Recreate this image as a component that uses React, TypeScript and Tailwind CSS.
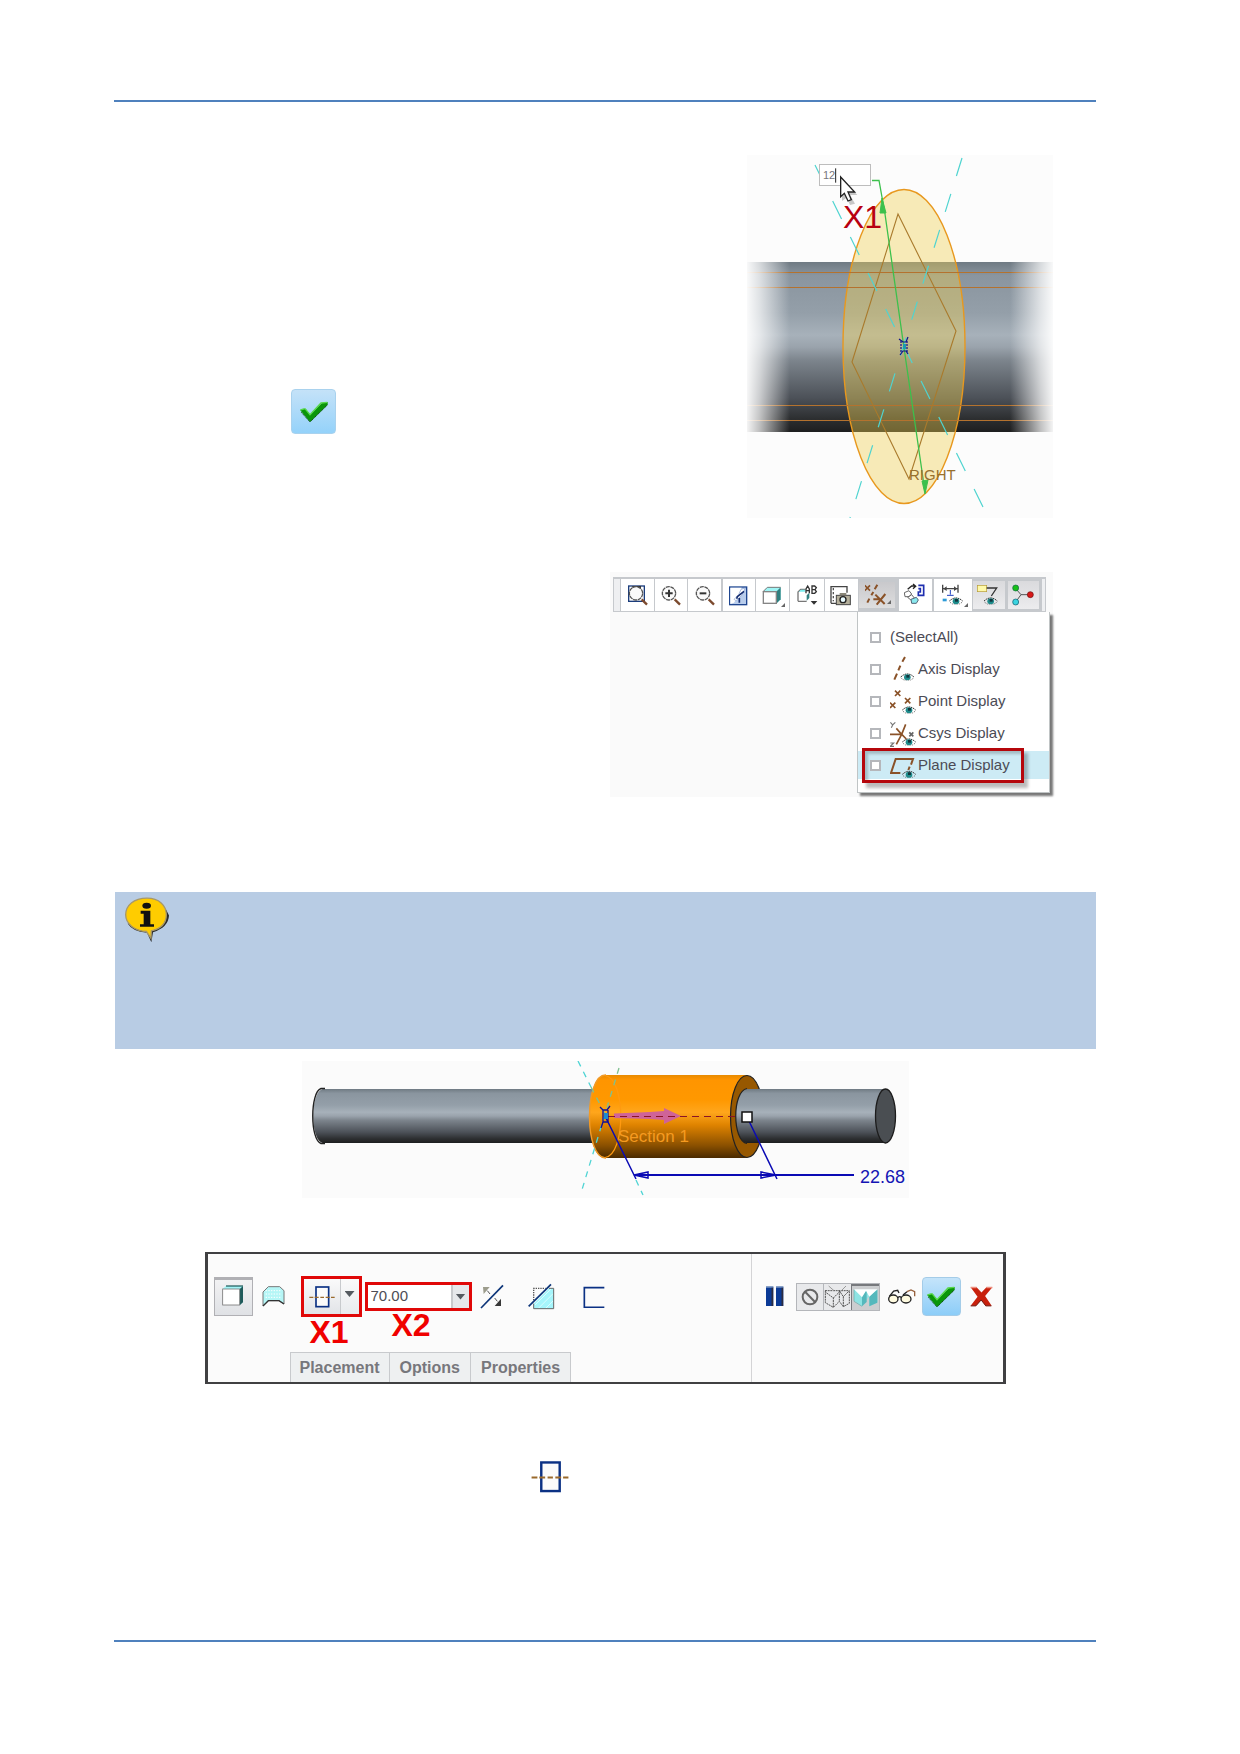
import type { ReactNode } from "react";

const STEEL: [number, string][] = [
  [0, "#6f7a83"],
  [0.08, "#8a959f"],
  [0.3, "#949fa9"],
  [0.43, "#a7b1ba"],
  [0.5, "#9aa3ac"],
  [0.58, "#7c848c"],
  [0.8, "#4c5158"],
  [0.92, "#2d2f31"],
  [1, "#1d1e1f"],
];

function Stops({ list }: { list: [number, string][] }) {
  return (
    <>
      {list.map(([o, c]) => (
        <stop key={o} offset={o} stopColor={c} />
      ))}
    </>
  );
}

function Icon({ box, w, h, children }: { box: string; w: number; h: number; children: ReactNode }) {
  return (
    <svg viewBox={box} width={w} height={h} className="shrink-0" aria-hidden="true">
      {children}
    </svg>
  );
}

/* ---------- shared marks ---------- */

function Eye({ x, y }: { x: number; y: number }) {
  return (
    <g transform={`translate(${x} ${y})`}>
      <path d="M0 9 L8 3 L16 0 H24 L32 3 L40 9" fill="none" stroke="#333" strokeWidth="3" strokeDasharray="5 2" />
      <path d="M2 13 L10 18 H30 L38 13" fill="none" stroke="#666" strokeWidth="2.5" strokeDasharray="4 3" />
      <ellipse cx="20" cy="10" rx="10" ry="9" fill="#1d8b8b" />
      <rect x="17" y="3" width="9" height="8" fill="#12343c" />
    </g>
  );
}

function Cross({ x, y, s, c }: { x: number; y: number; s: number; c: string }) {
  return <path d={`M${x - s} ${y - s} L${x + s} ${y + s} M${x + s} ${y - s} L${x - s} ${y + s}`} stroke={c} strokeWidth="5" />;
}

function CheckIcon() {
  return (
    <Icon box="86 94 90 72" w={30} h={24}>
      <path d="M90 125 L98 120 L107 122 L119 138 L155 103 L172 100 V108 L120 159 L114 154 Z" fill="#0a960a" />
      <path d="M90 124 L104 120 L119 138 L152 103 L171 101" fill="none" stroke="#58d84a" strokeWidth="4" />
      <path d="M93 131 L119 160 L171 109" fill="none" stroke="#0b4d12" strokeWidth="3" strokeDasharray="4 2" />
    </Icon>
  );
}

function SymmetricIcon({ w, h }: { w: number; h: number }) {
  return (
    <Icon box="326 122 78 66" w={w} h={h}>
      <rect x="347" y="125" width="38" height="59" fill="#fbfbfb" stroke="#0b3184" strokeWidth="5" />
      <path d="M327 156 H339 M343 156 H355 M360 156 H371 M376 156 H388 M392 156 H403" stroke="#9a6a2c" strokeWidth="4" />
    </Icon>
  );
}

/* ---------- sketch figure ---------- */

function SketchFigure() {
  return (
    <figure className="relative w-[306px]">
      <svg viewBox="747 155 306 363" className="block w-full" role="img" aria-label="Sketched circle on shaft">
        <defs>
          <linearGradient id="shaft" x1="0" x2="0" y1="0" y2="1">
            <Stops list={STEEL} />
          </linearGradient>
          <linearGradient id="fade" x1="0" x2="1" y1="0" y2="0">
            <stop offset="0" stopColor="#fff" stopOpacity="0.95" />
            <stop offset="0.04" stopColor="#fff" stopOpacity="0.72" />
            <stop offset="0.14" stopColor="#fff" stopOpacity="0" />
            <stop offset="0.86" stopColor="#fff" stopOpacity="0" />
            <stop offset="0.96" stopColor="#fff" stopOpacity="0.72" />
            <stop offset="1" stopColor="#fff" stopOpacity="0.95" />
          </linearGradient>
        </defs>
        <rect x="747" y="155" width="306" height="363" fill="#fcfcfc" />
        <rect x="747" y="262" width="306" height="170" fill="url(#shaft)" />
        <ellipse cx="904" cy="346.5" rx="61" ry="157" fill="#f0d050" fillOpacity="0.4" stroke="#e8981e" strokeWidth="1.4" />
        <path d="M747 272.5 H1053 M747 287.5 H1053 M747 405.5 H1053 M747 420.5 H1053" stroke="#b4722e" strokeWidth="1" />
        <path d="M898 214 L956 331 L909 479 L852 362 Z" fill="none" stroke="#a97a2c" strokeWidth="1.1" />
        <g stroke="#4fd4d0" strokeWidth="1.2">
          <line x1="815" y1="165" x2="983" y2="507" strokeDasharray="20.1 20" />
          <line x1="962" y1="158" x2="850" y2="518" strokeDasharray="18.8 18.8" />
        </g>
        <rect x="747" y="262" width="306" height="170" fill="url(#fade)" />
        <path d="M872 180.5 H879 L885 214 L903 341 L925 492" fill="none" stroke="#3cc04c" strokeWidth="1.3" />
        <path d="M882 198 L880 213 L886 213 Z M925 494 L922 481 L928 480 Z" fill="#3cc04c" stroke="#3cc04c" />
        <g fill="none" stroke="#10108a" strokeWidth="1.2">
          <path d="M899 339 L903 342 H906 L908 337 M900 355 L903 351 H906 L908 354" />
          <path d="M901 341 V352 M907 341 V352" strokeDasharray="2 1" />
          <rect x="903" y="344" width="3" height="5" fill="#1a9ab0" stroke="none" />
        </g>
        <text x="909" y="480" fontSize="15" fill="#98702e" fontFamily="Liberation Sans, sans-serif">
          RIGHT
        </text>
        <text x="843" y="228" fontSize="32" fill="#b80010" fontFamily="Liberation Sans, sans-serif">
          X1
        </text>
      </svg>
      <input
        aria-label="Diameter"
        defaultValue="12"
        className="absolute left-[72px] top-[9px] h-[22px] w-[52px] border border-[#bdbdbd] bg-white pl-[3px] font-['Liberation_Sans',sans-serif] text-[11px] text-[#77777c] outline-none"
      />
      <svg viewBox="285 50 72 120" className="absolute left-[88px] top-3 h-10 w-6" aria-hidden="true">
        <path d="M287 54 V97" stroke="#222" strokeWidth="3" />
        <path d="M306 84 L352 134 L330 134 L345 160 L330 164 L320 142 L306 152 Z" fill="#888" fillOpacity="0.45" />
        <path d="M302 80 V139 L313 129 L324 152 L334 148 L324 125 H344 Z" fill="#fff" stroke="#222" strokeWidth="4" />
      </svg>
    </figure>
  );
}

/* ---------- view toolbar ---------- */

function Magnifier({ children }: { children?: ReactNode }) {
  return (
    <>
      <path d="M108 102 L124 118" stroke="#7c4a2e" strokeWidth="7" />
      <circle cx="91" cy="84" r="20" fill="#fafafa" stroke="#555" strokeWidth="4" strokeDasharray="12 2" />
      {children}
    </>
  );
}

const tools: { name: string; cls: string; more?: boolean; art: ReactNode }[] = [
  {
    name: "Refit",
    cls: "w-[34px]",
    art: (
      <>
        <rect x="69" y="62" width="47" height="46" fill="#fff" stroke="#1b3d7c" strokeWidth="4" />
        <rect x="80" y="62" width="26" height="8" fill="#333" />
        <Magnifier />
      </>
    ),
  },
  {
    name: "Zoom In",
    cls: "w-[33px]",
    art: (
      <Magnifier>
        <path d="M80 84 H102 M91 73 V95" stroke="#333" strokeWidth="6" />
      </Magnifier>
    ),
  },
  {
    name: "Zoom Out",
    cls: "w-[34px]",
    art: (
      <Magnifier>
        <path d="M81 84 H101" stroke="#333" strokeWidth="6" />
      </Magnifier>
    ),
  },
  {
    name: "Repaint",
    cls: "w-[34px] border-l-2",
    art: (
      <>
        <rect x="69" y="65" width="51" height="53" fill="#b9cdec" stroke="#1f4690" strokeWidth="4" />
        <path d="M71 67 H105 L96 92 L82 112 L71 116 Z" fill="#fff" />
        <path d="M103 72 L116 68 L105 90 L88 106 L82 102 L96 88 Z" fill="#fff" stroke="#8aa2d0" strokeWidth="2" />
        <path d="M112 78 L92 94 L90 100 M98 98 V112" fill="none" stroke="#142c70" strokeWidth="5" />
      </>
    ),
  },
  {
    name: "Display Style",
    cls: "w-[34px]",
    more: true,
    art: (
      <>
        <path d="M68 78 L80 66 H120 V102 L108 114 V78 Z" fill="#9ff5f5" />
        <path d="M108 78 L120 66 V102 L108 114 Z" fill="#2f8080" />
        <rect x="68" y="79" width="39" height="35" fill="#fff" stroke="#858585" strokeWidth="4" />
        <path d="M68 78 L80 66 H120" fill="none" stroke="#777" strokeWidth="3" />
      </>
    ),
  },
  {
    name: "Saved Orientations",
    cls: "w-[35px]",
    art: (
      <g transform="translate(8 0)">
        <path d="M62 108 V80 L70 72 H84 M62 108 H88" fill="none" stroke="#777" strokeWidth="4" />
        <path d="M64 79 L71 73 H84 V79 Z" fill="#7cecec" />
        <path d="M88 90 L96 82 V98 L88 106 Z" fill="#2f8080" />
        <path d="M86 84 V71 L91 62 L96 71 V84 M86 76 H96" fill="none" stroke="#333" strokeWidth="4" />
        <path d="M104 62 V84 H112 L117 79 L113 73 L117 67 L112 62 Z M104 73 H112" fill="none" stroke="#333" strokeWidth="4" />
        <path d="M100 107 H120 L110 118 Z" fill="#333" />
      </g>
    ),
  },
  {
    name: "View Manager",
    cls: "w-[34px]",
    art: (
      <>
        <path d="M64 62 V114 M64 64 H112 V82 M64 114 H80" fill="none" stroke="#444" strokeWidth="4" />
        <path d="M71 68 V108" stroke="#555" strokeWidth="4" strokeDasharray="7 5" />
        <rect x="80" y="90" width="42" height="28" fill="#b5b09c" stroke="#444" strokeWidth="3" />
        <rect x="90" y="83" width="20" height="7" fill="#8a8779" />
        <circle cx="100" cy="103" r="9" fill="#e9fbff" stroke="#222" strokeWidth="4" />
      </>
    ),
  },
  {
    name: "Datum Display Filters",
    cls: "w-10 border-[3px] border-[#b4b4b9] bg-linear-to-b from-[#c9c9cc] to-[#dededf]",
    more: true,
    art: (
      <g stroke="#8a5228" transform="translate(-2 0)">
        <Cross x={70} y={68} s={8} c="#8a5228" />
        <path d="M100 58 L92 72 M88 80 L82 90 M76 100 L70 112" strokeWidth="6" />
        <path d="M94 88 L122 116 M124 86 L98 118 M88 102 H112" strokeWidth="6" />
      </g>
    ),
  },
  {
    name: "Annotation Orientation",
    cls: "w-[34px]",
    art: (
      <>
        <path d="M72 72 L84 62 H94 M88 56 L96 63 L88 70" fill="none" stroke="#222" strokeWidth="4" />
        <path d="M104 60 H120 V90 H104 V80 H110 V70 H104" fill="none" stroke="#1f2fb0" strokeWidth="5" />
        <path d="M62 82 L76 76 L84 86 L76 94 H64 Z M72 96 L84 88 L92 98 L84 106 Z" fill="#fff" stroke="#666" strokeWidth="3" />
        <path d="M82 102 L98 96 L104 104 L98 114 H84 Z" fill="#8ae9ee" stroke="#567" strokeWidth="3" />
      </>
    ),
  },
  {
    name: "Dimension Display",
    cls: "w-10 border-l-2",
    more: true,
    art: (
      <g transform="translate(6 0)">
        <path d="M60 58 V82 M106 58 V82 M62 70 H104" stroke="#444" strokeWidth="4" />
        <path d="M62 70 L72 63 V77 Z M104 70 L94 63 V77 Z" fill="#444" />
        <path d="M83 74 V88 M73 90 H93" stroke="#1f3fc0" strokeWidth="3" />
        <rect x="60" y="100" width="12" height="8" fill="#2d9bd8" />
        <Eye x={80} y={98} />
      </g>
    ),
  },
  {
    name: "Annotation Display",
    cls: "w-[35px] border-2 border-[#b4b4b9] bg-linear-to-b from-[#dadadd] to-[#ececee]",
    art: (
      <>
        <rect x="62" y="60" width="28" height="19" fill="#fff9a8" stroke="#b59a34" strokeWidth="2" />
        <path d="M90 68 H120 L104 92" fill="none" stroke="#333" strokeWidth="4" />
        <Eye x={82} y={98} />
      </>
    ),
  },
  {
    name: "Spin Center",
    cls: "w-[34px] border-2 border-[#b4b4b9] bg-linear-to-b from-[#dadadd] to-[#ececee]",
    art: (
      <>
        <path d="M72 70 L88 88 L72 110 M88 88 H112" fill="none" stroke="#555" strokeWidth="3" />
        <circle cx="72" cy="68" r="9" fill="#18c018" stroke="#164" strokeWidth="2" />
        <circle cx="72" cy="110" r="9" fill="#3bd4e0" stroke="#156" strokeWidth="2" />
        <circle cx="116" cy="88" r="9" fill="#d81818" stroke="#611" strokeWidth="2" />
      </>
    ),
  },
];

const menuItems: { name: string; art: ReactNode }[] = [
  {
    name: "Axis Display",
    art: (
      <g transform="translate(0 -3)">
        <path d="M178 144 L170 158 M164 170 L158 184 M154 194 L146 212" stroke="#8a5228" strokeWidth="6" />
        <Eye x={165} y={195} />
      </g>
    ),
  },
  {
    name: "Point Display",
    art: (
      <g transform="translate(0 -96)">
        <Cross x={156} y={250} s={8} c="#8a5228" />
        <Cross x={141} y={286} s={8} c="#8a5228" />
        <Cross x={186} y={272} s={8} c="#8a5228" />
        <Eye x={170} y={291} />
      </g>
    ),
  },
  {
    name: "Csys Display",
    art: (
      <g transform="translate(0 -193)">
        <path d="M134 338 L141 346 L149 338 M141 346 L137 354 M134 400 H144 L134 410 H145" fill="none" stroke="#777" strokeWidth="3.5" />
        <Cross x={197} y={374} s={6} c="#666" />
        <path d="M133 374 H168 L152 356 M168 374 L180 344 M168 374 L152 404 M166 372 L182 388" fill="none" stroke="#8a5228" strokeWidth="5" />
        <Eye x={170} y={388} />
      </g>
    ),
  },
  {
    name: "Plane Display",
    art: (
      <g transform="translate(0 -290)">
        <path d="M164 491 H136 L150 449 H202 L196 466 M192 472 L188 482" fill="none" stroke="#8a5228" strokeWidth="6" />
        <Eye x={170} y={486} />
      </g>
    ),
  },
];

function Tick({ id }: { id: string }) {
  return <input id={id} type="checkbox" className="size-[11px] shrink-0 appearance-none border-2 border-[#b5b7bb] bg-white" />;
}

function ViewFigure() {
  return (
    <figure className="w-[443px] bg-[#fafafa] pt-[5px] pb-1 pl-[3px] font-['Liberation_Sans',sans-serif] text-[15px] text-[#4b4b55]">
      <div className="flex h-[35px] w-[433px] border-x border-t-2 border-b border-[#c6c9cd] bg-white">
        <span className="w-[6px] bg-[#eeeff1]" />
        {tools.map((t) => (
          <button key={t.name} aria-label={t.name} className={`relative flex shrink-0 items-center justify-center border-l border-[#c6c9cd] ${t.cls}`}>
            <Icon box="61 53 72 72" w={24} h={24}>
              {t.art}
            </Icon>
            {t.more && <span className="absolute right-1 bottom-1 size-1 bg-[#666] [clip-path:polygon(100%_0,100%_100%,0_100%)]" />}
          </button>
        ))}
        <span className="flex-1 border-l border-[#c6c9cd] bg-[#eeeff1]" />
      </div>
      <ul className="ml-[244px] w-[193px] border border-t-0 border-[#c0c4c5] bg-white pt-[9px] pb-[11px] shadow-[3px_3px_2px_#777]">
        <li className="flex h-8 items-center pl-3">
          <Tick id="all" />
          <label htmlFor="all" className="pl-[9px]">
            (SelectAll)
          </label>
        </li>
        {menuItems.map((m, i) => (
          <li key={m.name} className="relative flex h-8 items-center pl-3">
            {i === 3 && <span className="absolute inset-x-0 inset-y-[2px] bg-[#cdebf5]" />}
            <span className="relative flex items-center">
              <Tick id={m.name} />
              <label htmlFor={m.name} className="flex items-center pl-[9px]">
                <Icon box="133 138 78 81" w={26} h={27}>
                  {m.art}
                </Icon>
                <span className="pl-[2px]">{m.name}</span>
              </label>
            </span>
            {i === 3 && (
              <span className="absolute top-[-1px] left-1 h-[35px] w-[162px] border-[3px] border-[#b5060b] shadow-[4px_5px_3px_#0004,inset_3px_3px_3px_#0003]" />
            )}
          </li>
        ))}
      </ul>
    </figure>
  );
}

/* ---------- note ---------- */

function NoteIcon() {
  return (
    <Icon box="68 46 144 140" w={48} h={47}>
      <path d="M82 128 Q96 152 140 156 L153 184 L158 154 Q204 140 206 104 L196 84 Z" fill="#2a2a2a" />
      <path d="M140 52 C100 52 76 74 76 102 C76 130 104 150 138 152 L152 172 L153 150 C182 144 198 126 198 102 C198 74 176 52 140 52 Z" fill="#fc0" stroke="#a89868" strokeWidth="4" />
      <ellipse cx="139" cy="75" rx="13" ry="9" fill="#111" />
      <path d="M121 90 H150 V130 H161 V138 H119 V130 H130 V99 H121 Z" fill="#111" />
    </Icon>
  );
}

/* ---------- extrude preview ---------- */

function ExtrudeFigure() {
  return (
    <svg viewBox="302 1061 607 137" className="block w-[607px]" role="img" aria-label="Extrude preview, depth 22.68">
      <defs>
        <linearGradient id="rod" x1="0" x2="0" y1="0" y2="1">
          <Stops list={STEEL} />
        </linearGradient>
        <linearGradient id="orange" x1="0" x2="0" y1="0" y2="1">
          <Stops
            list={[
              [0, "#e88a00"],
              [0.06, "#ff9500"],
              [0.3, "#ff9800"],
              [0.45, "#ffa61c"],
              [0.6, "#e08400"],
              [0.85, "#8a5000"],
              [1, "#4a2a00"],
            ]}
          />
        </linearGradient>
      </defs>
      <rect x="302" y="1061" width="607" height="137" fill="#fbfbfb" />
      <path d="M323 1089 H600 V1143 H323 C310 1141 310 1091 323 1089 Z" fill="url(#rod)" />
      <path d="M325 1088.500 H321 C310 1092 310 1140 321 1143.500 H325" fill="none" stroke="#222" strokeWidth="1.4" />
      <path d="M605 1075 H747 V1158 H605 C584 1158 584 1075 605 1075 Z" fill="url(#orange)" />
      <path d="M606 1075 C584 1074 584 1159 606 1158" fill="none" stroke="#f09a28" strokeWidth="1.4" />
      <path d="M605 1075.500 C626 1078 626 1155 605 1157.500" fill="none" stroke="#ff9a10" strokeWidth="1.2" />
      <ellipse cx="747" cy="1116.500" rx="16.500" ry="41" fill="#975800" stroke="#222" strokeWidth="1.2" />
      <path d="M747 1089 H886 V1143 H747 C732 1141 732 1091 747 1089 Z" fill="url(#rod)" />
      <path d="M747 1088.500 C732 1091 732 1141 747 1143.500" fill="none" stroke="#222" strokeWidth="1.2" />
      <ellipse cx="885.500" cy="1116" rx="10" ry="27" fill="#4a4e52" stroke="#1c1c1c" strokeWidth="1.3" />
      <g stroke="#4fd4d4" strokeWidth="1.3" strokeDasharray="6 6">
        <line x1="578" y1="1061" x2="591" y2="1087" />
        <line x1="619" y1="1068" x2="605" y2="1114" stroke="#7fc090" />
        <line x1="591" y1="1087" x2="605" y2="1114" stroke="#7fc090" />
        <line x1="605" y1="1114" x2="581" y2="1193" />
        <line x1="636" y1="1180" x2="643" y2="1195" />
      </g>
      <path d="M614 1113.500 L650 1112 L664 1111 V1108 L681 1116 L664 1124 V1120 L650 1119 L614 1118 Z" fill="#cf6398" />
      <path d="M608 1116.500 H737" stroke="#8c1424" strokeWidth="1.2" strokeDasharray="7 5" />
      <text x="618" y="1142" fontSize="17" fill="#f59a20" fontFamily="Liberation Sans, sans-serif">
        Section 1
      </text>
      <g fill="none" stroke="#0a0ab4" strokeWidth="1.5">
        <path d="M606 1118 L636 1179 M748 1119 L777 1179" />
        <path d="M636 1175 H854" strokeWidth="1.8" />
        <path d="M634 1175 L648 1172 V1178 Z M776 1175 L761 1172 V1178 Z" />
      </g>
      <g fill="none" stroke="#101098" strokeWidth="1.3">
        <path d="M600 1107 L603 1110 H607 L610 1106 M603 1110 V1122 M608 1110 V1122 M601 1128 L603 1122 H608" />
        <rect x="604" y="1113" width="4" height="6" fill="#1b8ad0" stroke="none" />
      </g>
      <rect x="742" y="1112" width="10" height="10" fill="#fff" stroke="#111" strokeWidth="1.5" />
      <text x="860" y="1183" fontSize="18" fill="#1414b4" fontFamily="Liberation Sans, sans-serif">
        22.68
      </text>
    </svg>
  );
}

/* ---------- dashboard ---------- */

function Down() {
  return <span className="h-[6px] w-[10px] bg-[#555a60] [clip-path:polygon(0_0,100%_0,50%_100%)]" />;
}

function Dashboard() {
  return (
    <section className="flex h-[132px] w-[801px] border-x-[3px] border-y-2 border-[#404042] bg-[#fbfbfb] font-['Liberation_Sans',sans-serif]">
      <div className="flex flex-1 flex-col justify-between border-r border-[#d4d4d6] pt-[22px] pl-[6px]">
        <div className="flex h-[41px] items-center">
          <button aria-label="Solid" className="flex h-[39px] w-[39px] items-center justify-center border border-t-[3px] border-[#b0b0b4] bg-linear-to-b from-[#f2f2f3] to-[#dfe1e5] pb-1">
            <Icon box="68 121 66 63" w={22} h={21}>
              <path d="M70 132 L80 124 H131 V172 L122 180 Z" fill="#a2f4f6" />
              <path d="M122 132 L131 124 V173 L122 181 Z" fill="#1f5a5a" />
              <path d="M80 124 H131" stroke="#2c6666" strokeWidth="4" />
              <rect x="70" y="133" width="51" height="48" fill="#fff" stroke="#777" strokeWidth="2.5" />
            </Icon>
          </button>
          <button aria-label="Surface" className="ml-[9px]">
            <Icon box="185 121 69 69" w={23} h={23}>
              <path d="M188 184 V142 L204 126 H238 L251 138 V178 L236 168 H204 Z" fill="#b5f6f6" stroke="#777" strokeWidth="3" />
              <path d="M188 184 L204 168 H236 L251 178" fill="none" stroke="#333" strokeWidth="4" />
              <path d="M196 138 H244 M196 148 H244 M196 158 H244" stroke="#fff" strokeWidth="3" strokeDasharray="4 4" />
            </Icon>
          </button>
          <div className="relative ml-4 flex h-[41px] w-[61px] border-[3px] border-[#e00808]">
            <button aria-label="Symmetric depth" className="flex flex-1 items-center justify-center bg-linear-to-b from-[#fafafa] to-[#e2e4e8]">
              <SymmetricIcon w={26} h={22} />
            </button>
            <button aria-label="Depth options" className="flex w-[19px] justify-center border-l border-[#c8cacd] bg-linear-to-b from-[#fafafa] to-[#e9ebee] pt-3">
              <Down />
            </button>
            <span className="absolute top-[35px] left-[6px] text-[32px] leading-9 font-bold text-[#f00000]">X1</span>
          </div>
          <div className="relative ml-[3px] flex h-[29px] w-[107px] border-[3px] border-[#e00808]">
            <input aria-label="Depth value" defaultValue="70.00" className="w-0 flex-1 bg-white pl-[3px] text-[15px] text-[#4d4d55] outline-none" />
            <button aria-label="Recent values" className="flex w-[18px] items-center justify-center border-l-2 border-[#c8cacd] bg-[#e6e8eb]">
              <Down />
            </button>
            <span className="absolute top-[22px] left-6 text-[32px] leading-9 font-bold text-[#f00000]">X2</span>
          </div>
          <button aria-label="Flip direction" className="ml-2">
            <Icon box="90 114 72 75" w={24} h={25}>
              <path d="M93 186 L159 118" stroke="#0c3478" strokeWidth="5" />
              <path d="M99 123 H119 L101 144 Z" fill="#9c9c8c" />
              <path d="M112 134 L120 144 M134 156 L142 166" stroke="#555" strokeWidth="3" />
              <path d="M153 158 V180 H134 Z" fill="#383838" />
            </Icon>
          </button>
          <button aria-label="Remove material" className="ml-6">
            <Icon box="231 108 81 81" w={27} h={27}>
              <path d="M248 170 L294 124 H308 V185 H248 Z" fill="#a5f5fb" />
              <path d="M262 184 L306 140 M284 184 L306 162 M252 174 L300 126" stroke="#d9fdff" strokeWidth="3" />
              <path d="M294 124 H308 V185 H248 V170" fill="none" stroke="#666" strokeWidth="3" />
              <path d="M248 160 V124 H284" fill="none" stroke="#555" strokeWidth="4" strokeDasharray="4 3" />
              <path d="M233 178 L300 112" stroke="#0c3478" strokeWidth="5" />
            </Icon>
          </button>
          <button aria-label="Thicken sketch" className="ml-7">
            <Icon box="395 121 66 66" w={22} h={22}>
              <path d="M459 126 H399 V185 H459" fill="none" stroke="#0b3184" strokeWidth="5" />
            </Icon>
          </button>
        </div>
        <div role="tablist" className="ml-[76px] flex h-[30px] text-base font-bold text-[#77777c]">
          {["Placement", "Options", "Properties"].map((t, i) => (
            <button
              key={t}
              role="tab"
              className={`border-t border-l border-[#c8cacd] bg-[#eef0f1] px-[9px] font-bold ${i === 2 ? "border-r" : "border-r-0"} ${i === 0 ? "" : "px-[10px]"}`}
            >
              {t}
            </button>
          ))}
        </div>
      </div>
      <div className="mt-[22px] flex h-[41px] w-[251px] items-center pl-[14px]">
        <button aria-label="Pause">
          <Icon box="75 123 54 63" w={18} h={21}>
            <path d="M75 125 H97 V183 H75 Z M105 125 H127 V183 H105 Z" fill="#0b3a96" />
            <path d="M75 126 H97 M105 126 H127" stroke="#7894c0" strokeWidth="5" />
            <path d="M94 128 V183 M124 128 V183" stroke="#2c2c40" strokeWidth="5" />
          </Icon>
        </button>
        <div className="ml-3 flex h-[28px] w-[84px] border border-[#b4b6ba]">
          <button aria-label="No preview" className="flex w-[27px] items-center justify-center bg-[#e8e9eb]">
            <Icon box="177 126 54 54" w={18} h={18}>
              <circle cx="204" cy="153" r="22" fill="none" stroke="#666" strokeWidth="6" />
              <path d="M190 138 L219 168" stroke="#666" strokeWidth="6" />
            </Icon>
          </button>
          <button aria-label="Unattached preview" className="flex w-[28px] items-center justify-center border-l border-[#b4b6ba] bg-[#e8e9eb]">
            <Icon box="246 117 81 72" w={27} h={24}>
              <path d="M249 134 H322 M250 134 V170 L274 184 L292 166 L304 182 L322 172 V134 M274 184 V156 L250 138 M274 156 L296 134 M304 182 V152 L292 134 M304 152 L322 134 M292 134 V166" fill="none" stroke="#555" strokeWidth="3" strokeDasharray="6 2" />
              <path d="M260 120 L276 134 M312 120 L298 134" stroke="#999" strokeWidth="3" />
            </Icon>
          </button>
          <button aria-label="Attached preview" className="flex flex-1 items-center justify-center border-t-2 border-l border-[#77797d] bg-[#ccced0]">
            <Icon box="332 123 81 63" w={27} h={21}>
              <path d="M338 131 H408 V168 L384 181 V150 L362 181 L338 164 Z" fill="#8ee4e4" />
              <path d="M362 150 L376 132 V168 L362 181 Z M384 150 L408 131 V170 L384 181 Z" fill="#55b8bc" />
              <path d="M338 130 H408 L384 152 L374 134 L362 154 Z" fill="#fff" />
              <path d="M338 131 V166 L362 181" fill="none" stroke="#6aa" strokeWidth="2" />
            </Icon>
          </button>
        </div>
        <button aria-label="Verify" className="ml-[7px]">
          <Icon box="436 127 90 51" w={30} h={17}>
            <g fill="#fffbe0" stroke="#222" strokeWidth="4">
              <ellipse cx="455" cy="160" rx="14" ry="12" />
              <ellipse cx="493" cy="160" rx="15" ry="12" />
            </g>
            <path d="M469 156 Q474 150 479 156 M443 152 L456 136 L468 134 L472 142 M484 148 L496 138" fill="none" stroke="#222" strokeWidth="4" />
            <path d="M496 138 L508 133 L519 138 V152" fill="none" stroke="#96603c" strokeWidth="4" />
          </Icon>
        </button>
        <button aria-label="OK" className="ml-[5px] flex h-[39px] w-[39px] items-center justify-center rounded-sm border border-[#a4cce8] bg-linear-to-b from-[#c4e4fa] to-[#8ccdf8]">
          <CheckIcon />
        </button>
        <button aria-label="Cancel" className="ml-[9px]">
          <Icon box="688 122 70 63" w={23} h={21}>
            <path d="M690 125 H708 L723 141 L738 125 H756 L734 152 L754 182 H736 L722 164 L706 182 H690 L711 154 Z" fill="#c8200c" />
            <path d="M690 126 H708 M738 126 H756" stroke="#ee9080" strokeWidth="5" />
            <path d="M690 182 H706 L722 164 L736 182 H753" fill="none" stroke="#6a1008" strokeWidth="3" />
          </Icon>
        </button>
      </div>
    </section>
  );
}

export default function App() {
  return (
    <main className="bg-white pt-[100px] pr-[144px] pb-[112px] pl-[114px]">
      <hr className="border-t-2 border-[#4f81bd]" />
      <section className="mt-[53px] flex items-start justify-between pr-[43px]">
        <button aria-label="Accept sketch" className="mt-[234px] ml-[177px] flex size-[45px] items-center justify-center rounded-sm border border-[#a9d2ee] bg-linear-to-b from-[#c4e2f8] to-[#94d2fa]">
          <CheckIcon />
        </button>
        <SketchFigure />
      </section>
      <section className="mt-[54px] flex justify-end pr-[43px]">
        <ViewFigure />
      </section>
      <aside className="mt-[95px] ml-px h-[157px] bg-[#b8cce4] pt-1 pl-2">
        <NoteIcon />
      </aside>
      <section className="mt-3 flex justify-center">
        <ExtrudeFigure />
      </section>
      <div className="mt-[54px] flex justify-center">
        <Dashboard />
      </div>
      <div className="mt-[77px] flex pl-[417px]">
        <SymmetricIcon w={38} h={32} />
      </div>
      <hr className="mt-[147px] border-t-2 border-[#4f81bd]" />
    </main>
  );
}
